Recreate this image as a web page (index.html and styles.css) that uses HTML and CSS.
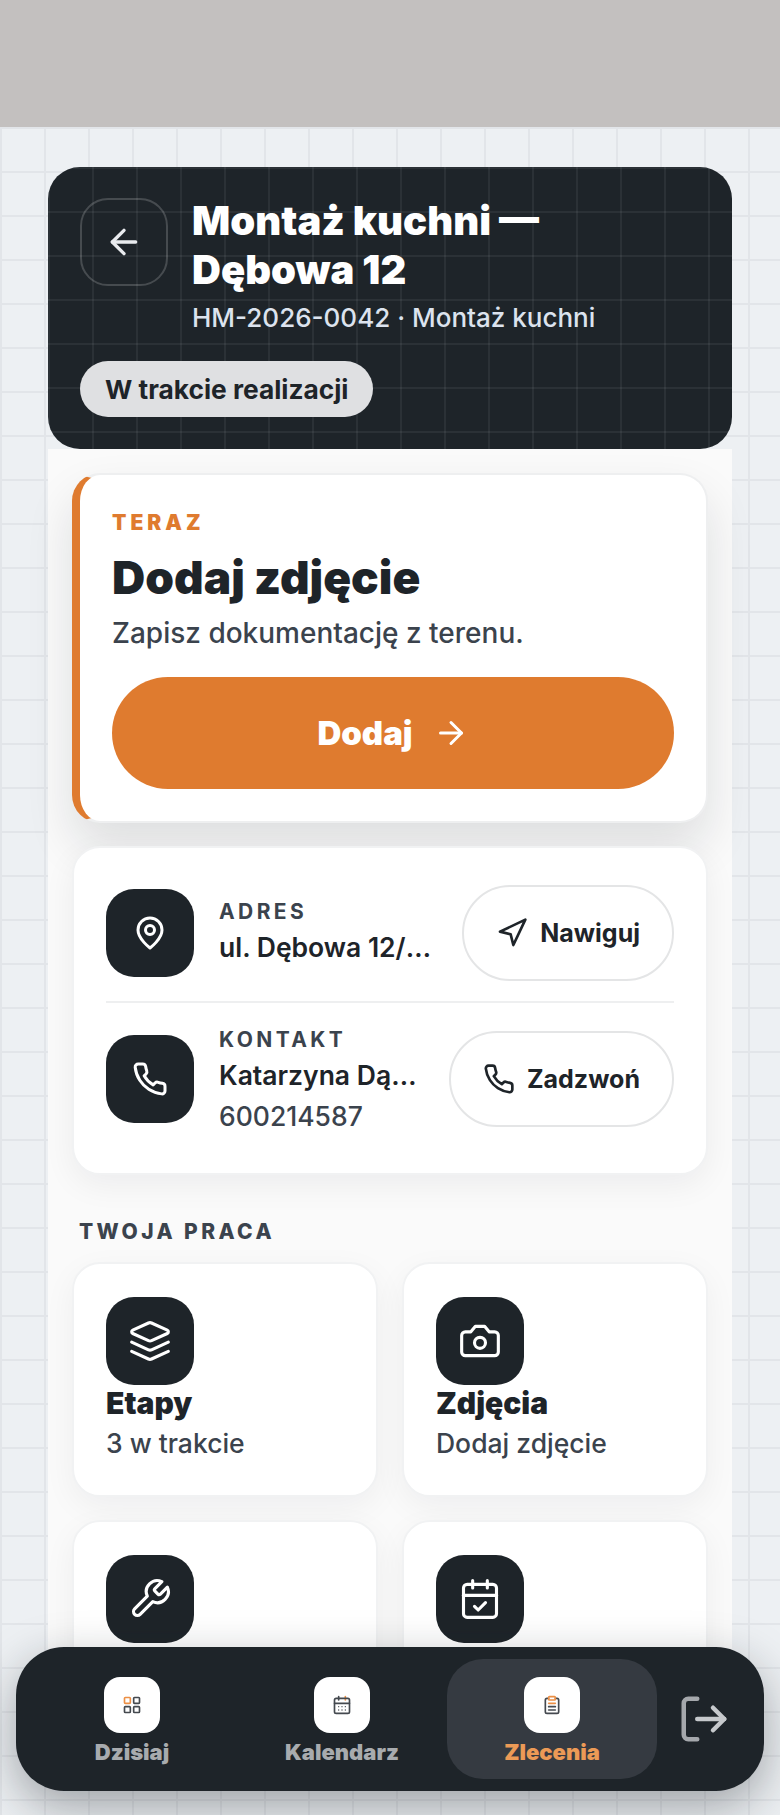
FILE: index.html
```html
<!DOCTYPE html>
<html lang="pl">
<head>
<meta charset="utf-8">
<title>Montaż kuchni — Dębowa 12</title>
<link rel="stylesheet" href="styles.css">
</head>
<body>
<div class="topbar"></div>
<div class="page">
  <main class="shell">
    <header class="hero">
      <div class="hero-top">
        <button class="back"><svg class="ico s40" viewBox="0 0 24 24"><path d="m12 19-7-7 7-7"/><path d="M19 12H5"/></svg></button>
        <div class="hero-text">
          <h1>Montaż kuchni — Dębowa 12</h1>
          <p>HM-2026-0042 · Montaż kuchni</p>
        </div>
      </div>
      <span class="pill">W trakcie realizacji</span>
    </header>

    <div class="content">
      <section class="now">
        <div class="now-label">TERAZ</div>
        <h2>Dodaj zdjęcie</h2>
        <p>Zapisz dokumentację z terenu.</p>
        <button class="cta">Dodaj<svg class="ico s36" viewBox="0 0 24 24"><path d="M5 12h14"/><path d="m12 5 7 7-7 7"/></svg></button>
      </section>

      <section class="info">
        <div class="row">
          <div class="tile"><svg class="ico s36" viewBox="0 0 24 24"><path d="M20 10c0 6-8 12-8 12s-8-6-8-12a8 8 0 0 1 16 0Z"/><circle cx="12" cy="10" r="3"/></svg></div>
          <div class="row-text">
            <div class="row-label">ADRES</div>
            <div class="row-value">ul. Dębowa 12/45</div>
          </div>
          <button class="act"><svg class="ico s32" viewBox="0 0 24 24"><polygon points="3 11 22 2 13 21 11 13 3 11"/></svg>Nawiguj</button>
        </div>
        <div class="sep"></div>
        <div class="row">
          <div class="tile"><svg class="ico s36" viewBox="0 0 24 24"><path d="M22 16.92v3a2 2 0 0 1-2.18 2 19.79 19.79 0 0 1-8.63-3.07 19.5 19.5 0 0 1-6-6 19.79 19.79 0 0 1-3.07-8.67A2 2 0 0 1 4.11 2h3a2 2 0 0 1 2 1.72 12.84 12.84 0 0 0 .7 2.81 2 2 0 0 1-.45 2.11L8.09 9.91a16 16 0 0 0 6 6l1.27-1.27a2 2 0 0 1 2.11-.45 12.84 12.84 0 0 0 2.81.7A2 2 0 0 1 22 16.92z"/></svg></div>
          <div class="row-text">
            <div class="row-label">KONTAKT</div>
            <div class="row-value">Katarzyna Dąbrowska</div>
            <div class="row-sub">600214587</div>
          </div>
          <button class="act"><svg class="ico s32" viewBox="0 0 24 24"><path d="M22 16.92v3a2 2 0 0 1-2.18 2 19.79 19.79 0 0 1-8.63-3.07 19.5 19.5 0 0 1-6-6 19.79 19.79 0 0 1-3.07-8.67A2 2 0 0 1 4.11 2h3a2 2 0 0 1 2 1.72 12.84 12.84 0 0 0 .7 2.81 2 2 0 0 1-.45 2.11L8.09 9.91a16 16 0 0 0 6 6l1.27-1.27a2 2 0 0 1 2.11-.45 12.84 12.84 0 0 0 2.81.7A2 2 0 0 1 22 16.92z"/></svg>Zadzwoń</button>
        </div>
      </section>

      <h3 class="section">TWOJA PRACA</h3>
      <div class="grid">
        <article class="card">
          <div class="tile"><svg class="ico s44" viewBox="0 0 24 24"><path d="M12.83 2.18a2 2 0 0 0-1.66 0L2.6 6.08a1 1 0 0 0 0 1.83l8.58 3.91a2 2 0 0 0 1.66 0l8.58-3.9a1 1 0 0 0 0-1.83Z"/><path d="m22 17.65-9.17 4.16a2 2 0 0 1-1.66 0L2 17.65"/><path d="m22 12.65-9.17 4.16a2 2 0 0 1-1.66 0L2 12.65"/></svg></div>
          <h4>Etapy</h4>
          <p>3 w trakcie</p>
        </article>
        <article class="card">
          <div class="tile"><svg class="ico s44" viewBox="0 0 24 24"><path d="M14.5 4h-5L7 7H4a2 2 0 0 0-2 2v9a2 2 0 0 0 2 2h16a2 2 0 0 0 2-2V9a2 2 0 0 0-2-2h-3l-2.5-3z"/><circle cx="12" cy="13" r="3"/></svg></div>
          <h4>Zdjęcia</h4>
          <p>Dodaj zdjęcie</p>
        </article>
        <article class="card">
          <div class="tile"><svg class="ico s44" viewBox="0 0 24 24"><path d="M14.7 6.3a1 1 0 0 0 0 1.4l1.6 1.6a1 1 0 0 0 1.4 0l3.77-3.77a6 6 0 0 1-7.94 7.94l-6.91 6.91a2.12 2.12 0 0 1-3-3l6.91-6.91a6 6 0 0 1 7.94-7.94l-3.76 3.76z"/></svg></div>
        </article>
        <article class="card">
          <div class="tile"><svg class="ico s44" viewBox="0 0 24 24"><path d="M8 2v4"/><path d="M16 2v4"/><rect x="3" y="4" width="18" height="18" rx="2"/><path d="M3 10h18"/><path d="m9 16 2 2 4-4"/></svg></div>
        </article>
      </div>
    </div>
  </main>

  <nav class="nav">
    <a class="nav-item">
      <span class="nav-tile"><svg class="mini" viewBox="0 0 24 24"><rect class="o" x="3" y="3" width="7" height="7" rx="1"/><rect x="14" y="3" width="7" height="7" rx="1"/><rect x="14" y="14" width="7" height="7" rx="1"/><rect x="3" y="14" width="7" height="7" rx="1"/></svg></span>
      <span class="nav-label">Dzisiaj</span>
    </a>
    <a class="nav-item">
      <span class="nav-tile"><svg class="mini" viewBox="0 0 24 24"><path d="M8 2v4"/><path class="o" d="M16 2v4"/><rect x="3" y="4" width="18" height="18" rx="2"/><path d="M3 10h18"/><path class="dots" d="M8 14h.01M12 14h.01M16 14h.01M8 18h.01M12 18h.01M16 18h.01"/></svg></span>
      <span class="nav-label">Kalendarz</span>
    </a>
    <a class="nav-item active">
      <span class="nav-tile"><svg class="mini" viewBox="0 0 24 24"><path d="M16 4h2a2 2 0 0 1 2 2v14a2 2 0 0 1-2 2H6a2 2 0 0 1-2-2V6a2 2 0 0 1 2-2h2"/><rect class="o" x="8" y="2" width="8" height="4" rx="1"/><path class="o" d="M8 10h8"/><path d="M8 14h8"/><path d="M8 18h8"/></svg></span>
      <span class="nav-label">Zlecenia</span>
    </a>
    <button class="logout"><svg class="ico s54" viewBox="0 0 24 24"><path d="M9 21H5a2 2 0 0 1-2-2V5a2 2 0 0 1 2-2h4"/><polyline class="lo-arrow" points="16 17 21 12 16 7"/><line class="lo-arrow" x1="21" y1="12" x2="9" y2="12"/></svg></button>
  </nav>
</div>
</body>
</html>
```

FILE: styles.css
```css
* { box-sizing: border-box; }
html, body { margin: 0; padding: 0; }
body {
  width: 780px;
  height: 1815px;
  overflow: hidden;
  font-family: "Inter", "Liberation Sans", sans-serif;
  color: #1e2429;
  background: #edf0f3;
}
h1, h2, h3, h4, p { margin: 0; }
button { font-family: inherit; cursor: pointer; }

.topbar { height: 127px; background: #c3c0bf; }

.page {
  position: relative;
  height: 1688px;
  overflow: hidden;
  background-color: #edf0f3;
  background-image:
    linear-gradient(90deg, #e2e5e9 2px, transparent 2px),
    linear-gradient(#e2e5e9 2px, transparent 2px);
  background-size: 44px 44px;
}

.shell {
  margin: 0 48px;
  padding-top: 40px;
  height: 100%;
}

.hero {
  height: 282px;
  padding: 29px 32px 0;
  border-radius: 32px;
  background-color: #1e2429;
  background-image:
    linear-gradient(90deg, rgba(255,255,255,.06) 2px, transparent 2px),
    linear-gradient(rgba(255,255,255,.06) 2px, transparent 2px);
  background-size: 44px 44px;
  background-position: 44px 44px;
  color: #fff;
}
.hero-top { display: flex; gap: 24px; align-items: flex-start; }
.back {
  flex: none;
  width: 88px;
  height: 88px;
  margin-top: 2px;
  display: flex;
  align-items: center;
  justify-content: center;
  border: 2px solid rgba(255,255,255,.18);
  border-radius: 28px;
  background: transparent;
  color: #e9ebee;
  padding: 0;
}
.hero-text { flex: 1; min-width: 0; }
h1 {
  font-size: 40px;
  line-height: 49px;
  font-weight: 900;
  letter-spacing: 0;
  width: 420px;
}
.hero-text p {
  font-size: 26px;
  line-height: 36px;
  font-weight: 500;
  color: #dce3ee;
  margin-top: 6px;
}
.pill {
  display: inline-flex;
  align-items: center;
  height: 56px;
  margin-top: 25px;
  padding: 0 25px;
  border-radius: 28px;
  background: #dfe0e2;
  color: #1e2429;
  font-size: 26.3px;
  font-weight: 700;
}

.content {
  padding: 24px 24px 0;
  height: 1239px;
  background: #fafafa;
}

.now {
  height: 350px;
  padding: 34px 32px 0;
  background: #fff;
  border: 2px solid #eeeff0;
  border-left: 8px solid #df7b2f;
  border-radius: 28px;
  box-shadow: 0 24px 48px rgba(20,25,30,.12);
}
.now-label {
  font-size: 21px;
  line-height: 28px;
  font-weight: 900;
  letter-spacing: 4px;
  color: #df7b2f;
}
.now h2 {
  margin-top: 16px;
  font-size: 46px;
  line-height: 48px;
  font-weight: 900;
}
.now p {
  margin-top: 14px;
  font-size: 28px;
  line-height: 36px;
  font-weight: 500;
  color: #3b434d;
}
.cta {
  margin-top: 26px;
  width: 100%;
  height: 112px;
  border: 0;
  border-radius: 56px;
  background: #df7b2f;
  color: #fff;
  font-size: 33px;
  font-weight: 900;
  display: flex;
  align-items: center;
  justify-content: center;
  gap: 20px;
}

.info {
  margin-top: 23px;
  height: 329px;
  padding: 37px 32px 0;
  background: #fff;
  border: 2px solid #f1f2f3;
  border-radius: 28px;
  box-shadow: 0 10px 32px rgba(20,25,30,.06);
}
.row { display: flex; align-items: center; gap: 25px; }
.row:first-child { height: 96px; }
.row:first-child .row-text { margin-bottom: 4px; }
.row:last-child { height: 112px; }
.row:last-child .row-text { margin-top: 2px; }
.tile {
  flex: none;
  width: 88px;
  height: 88px;
  border-radius: 28px;
  background: #1e2429;
  color: #fff;
  display: flex;
  align-items: center;
  justify-content: center;
}
.row-text { flex: 1; min-width: 0; }
.row-label {
  font-size: 21px;
  line-height: 28px;
  font-weight: 700;
  letter-spacing: 3.4px;
  color: #3b434d;
}
.row-value {
  margin-top: 3px;
  font-size: 26.5px;
  line-height: 36px;
  font-weight: 600;
  white-space: nowrap;
  overflow: hidden;
  text-overflow: ellipsis;
}
.row-sub {
  margin-top: 5px;
  font-size: 26.5px;
  line-height: 36px;
  font-weight: 500;
  color: #3b434d;
}
.act {
  flex: none;
  height: 96px;
  padding: 0 32px;
  display: flex;
  align-items: center;
  gap: 12px;
  background: #fff;
  border: 2px solid #e4e5e6;
  border-radius: 48px;
  color: #1e2429;
  font-size: 25px;
  font-weight: 700;
}
.sep { height: 2px; margin: 20px 0; background: #eeeff0; }

.section {
  margin: 43px 0 16px 7px;
  font-size: 21px;
  line-height: 28px;
  font-weight: 800;
  letter-spacing: 3.4px;
  color: #3b434d;
}
.grid {
  display: grid;
  grid-template-columns: 1fr 1fr;
  column-gap: 24px;
  row-gap: 23px;
}
.card {
  height: 235px;
  padding: 33px 32px 0;
  background: #fff;
  border: 2px solid #f1f2f3;
  border-radius: 28px;
  box-shadow: 0 10px 32px rgba(20,25,30,.05);
}
.card h4 {
  font-size: 30px;
  line-height: 36px;
  font-weight: 900;
}
.card p {
  margin-top: 6px;
  font-size: 26.5px;
  line-height: 32px;
  font-weight: 500;
  color: #3b434d;
}

.ico {
  fill: none;
  stroke: currentColor;
  stroke-width: 2;
  stroke-linecap: round;
  stroke-linejoin: round;
  flex: none;
}
.s32 { width: 32px; height: 32px; }
.s36 { width: 36px; height: 36px; }
.s40 { width: 40px; height: 40px; }
.s44 { width: 44px; height: 44px; stroke-width: 1.7; }
.s54 { width: 54px; height: 54px; }

.nav {
  position: absolute;
  left: 16px;
  right: 16px;
  bottom: 24px;
  height: 144px;
  padding: 12px 0 12px 11px;
  display: flex;
  align-items: stretch;
  border-radius: 48px;
  background: #1e2429;
  box-shadow: 0 16px 48px rgba(20,25,30,.36);
}
.nav-item {
  width: 210px;
  display: flex;
  flex-direction: column;
  align-items: center;
  padding-top: 18px;
  border-radius: 36px;
}
.nav-item.active { background: #353a41; }
.nav-tile {
  width: 56px;
  height: 56px;
  border-radius: 16px;
  background: #fff;
  display: flex;
  align-items: center;
  justify-content: center;
  margin-bottom: 4px;
}
.nav-label {
  font-size: 22px;
  line-height: 30px;
  font-weight: 900;
  color: #a8abae;
}
.active .nav-label { color: #ec9a56; }
.mini {
  width: 20px;
  height: 20px;
  fill: none;
  stroke: #44494f;
  stroke-width: 2;
  stroke-linecap: round;
  stroke-linejoin: round;
}
.mini .o { stroke: #ec8f45; }
.mini .dots { stroke-width: 1.6; }
.logout {
  flex: 1;
  padding: 0 14px 0 0;
  background: none;
  border: 0;
  display: flex;
  align-items: center;
  justify-content: center;
  color: #a5a8ac;
}
.lo-arrow { stroke: #c6c9cc; }
```
